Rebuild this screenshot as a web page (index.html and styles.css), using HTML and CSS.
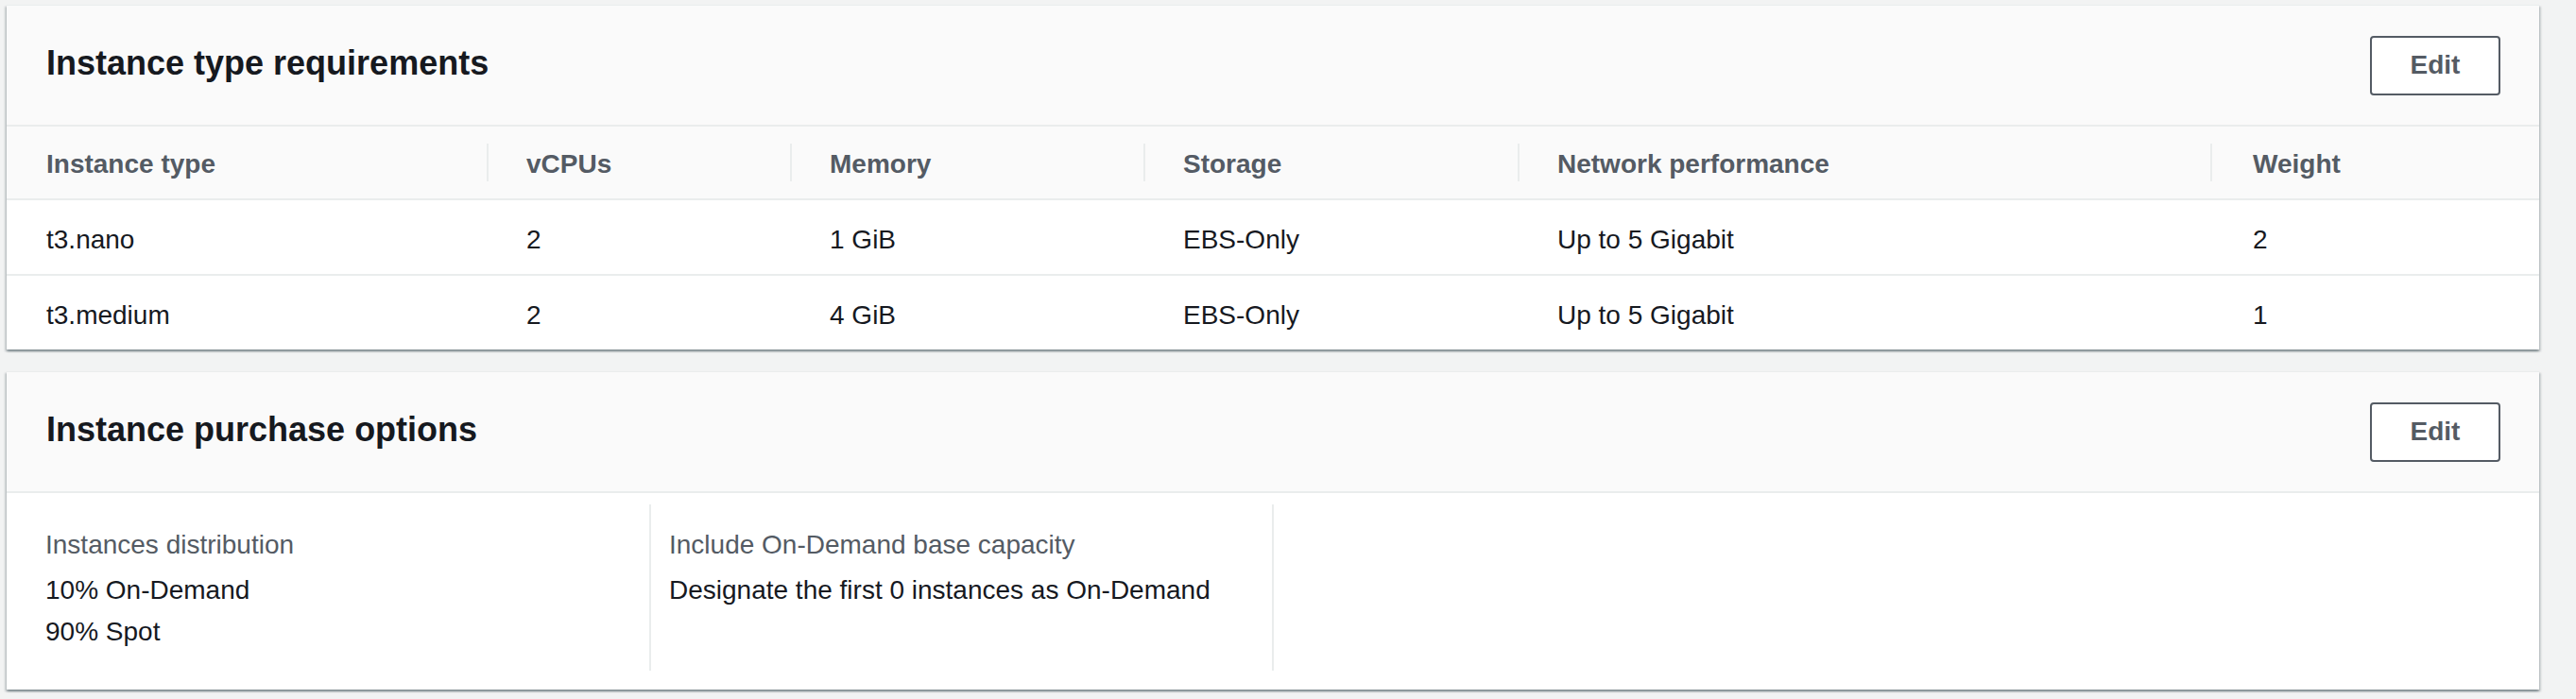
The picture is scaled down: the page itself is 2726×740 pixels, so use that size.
FILE: index.html
```html
<!DOCTYPE html>
<html lang="en">
<head>
<meta charset="utf-8">
<title>Instance details</title>
<link rel="stylesheet" href="styles.css">
</head>
<body>
<div class="page">
  <section class="card">
    <header class="card-header">
      <h2 class="card-title">Instance type requirements</h2>
      <button class="btn" type="button">Edit</button>
    </header>
    <div class="table">
      <div class="row head">
        <div class="cell">Instance type</div>
        <div class="cell">vCPUs</div>
        <div class="cell">Memory</div>
        <div class="cell">Storage</div>
        <div class="cell">Network performance</div>
        <div class="cell">Weight</div>
      </div>
      <div class="row">
        <div class="cell">t3.nano</div>
        <div class="cell">2</div>
        <div class="cell">1 GiB</div>
        <div class="cell">EBS-Only</div>
        <div class="cell">Up to 5 Gigabit</div>
        <div class="cell">2</div>
      </div>
      <div class="row">
        <div class="cell">t3.medium</div>
        <div class="cell">2</div>
        <div class="cell">4 GiB</div>
        <div class="cell">EBS-Only</div>
        <div class="cell">Up to 5 Gigabit</div>
        <div class="cell">1</div>
      </div>
    </div>
  </section>

  <section class="card">
    <header class="card-header">
      <h2 class="card-title">Instance purchase options</h2>
      <button class="btn" type="button">Edit</button>
    </header>
    <div class="columns">
      <div class="col">
        <div class="label">Instances distribution</div>
        <div class="value">10% On-Demand</div>
        <div class="value">90% Spot</div>
      </div>
      <div class="col">
        <div class="label">Include On-Demand base capacity</div>
        <div class="value">Designate the first 0 instances as On-Demand</div>
      </div>
      <div class="col"></div>
    </div>
  </section>
</div>
</body>
</html>
```

FILE: styles.css
```css
* { box-sizing: border-box; }

html, body {
  margin: 0;
  padding: 0;
  background: #f2f3f3;
  font-family: "Liberation Sans", Arial, sans-serif;
  color: #16191f;
}

.page {
  padding: 5px 39px 10px 7px;
  display: flex;
  flex-direction: column;
  gap: 23px;
}

.card {
  background: #ffffff;
  border-top: 1px solid #eaeded;
  box-shadow: 0 2px 2px 0 rgba(0, 28, 36, 0.3),
              2px 2px 2px 0 rgba(0, 28, 36, 0.15),
              -2px 2px 2px 0 rgba(0, 28, 36, 0.15);
}

.card-header {
  height: 128px;
  background: #fafafa;
  border-bottom: 2px solid #eaeded;
  display: flex;
  align-items: center;
  justify-content: space-between;
  padding: 0 41px 0 42px;
}

.card-title {
  margin: 0;
  padding-bottom: 4px;
  font-size: 36px;
  font-weight: 700;
  color: #16191f;
  line-height: 44px;
}

.btn {
  width: 138px;
  height: 63px;
  background: #ffffff;
  border: 2px solid #545b64;
  border-radius: 4px;
  color: #545b64;
  font-family: "Liberation Sans", Arial, sans-serif;
  font-size: 28px;
  font-weight: 700;
  padding: 0;
}

.row {
  display: grid;
  grid-template-columns: 508px 321px 374px 396px 733px 1fr;
  height: 80px;
  border-bottom: 2px solid #eaeded;
}

.row:last-child {
  height: 78px;
  border-bottom: none;
}

.row.head {
  height: 78px;
  background: #fafafa;
  color: #545b64;
  font-weight: 700;
}

.cell {
  display: flex;
  align-items: center;
  padding: 5px 0 0 42px;
  font-size: 28px;
  white-space: nowrap;
}

.row .cell:last-child {
  padding-left: 45px;
}

.head .cell {
  padding-top: 3px;
}

.head .cell + .cell {
  background: linear-gradient(#eaeded, #eaeded) left center / 2px 40px no-repeat;
}

.columns {
  display: grid;
  grid-template-columns: 680px 659px 1fr;
  padding: 12px 0 20px 0;
}

.col {
  padding: 21px 0 19px 19px;
  border-left: 2px solid #eaeded;
  font-size: 28px;
  line-height: 44px;
}

.col:first-child {
  border-left: none;
  padding-left: 41px;
}

.label {
  color: #545b64;
  margin-bottom: 4px;
}

.value {
  color: #16191f;
}
```
